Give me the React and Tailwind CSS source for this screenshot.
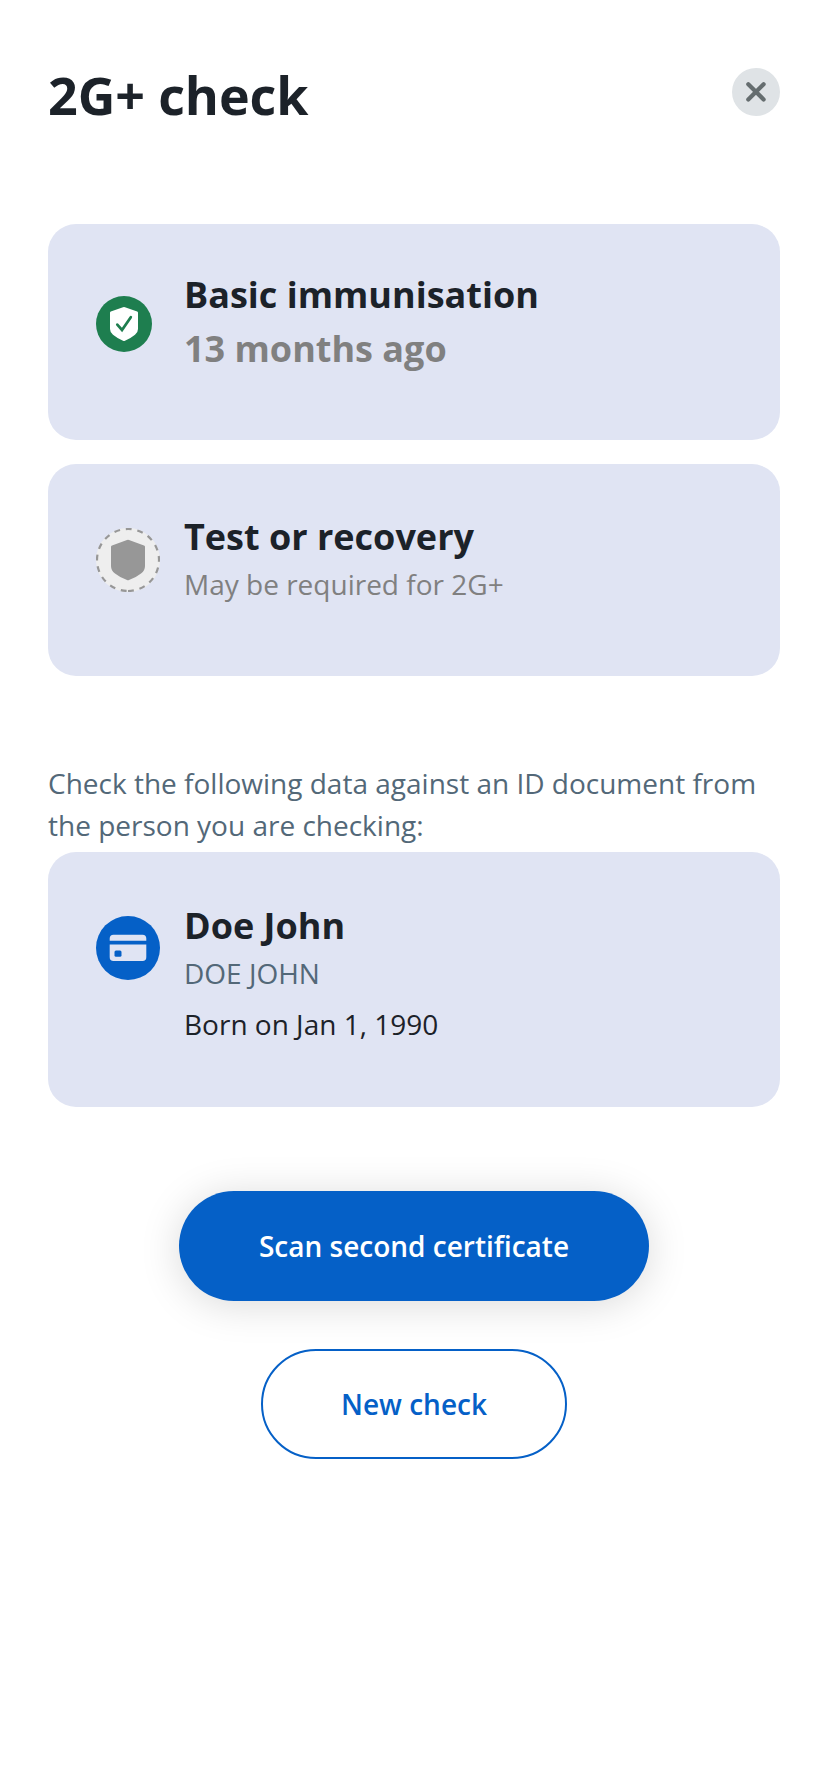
export default function App() {
  return (
    <main className="min-h-[1792px] w-full bg-white px-12 font-['Open_Sans',sans-serif] text-[#1c2229]">
      <header className="flex h-[224px] items-start justify-between pt-[68px]">
        <h1 className="mt-[-9px] text-[52px] font-bold leading-[72px] tracking-[-0.1px]">2G+ check</h1>
        <button aria-label="Close" className="flex size-12 items-center justify-center rounded-full bg-[#dfe3e6]">
          <svg className="size-12" viewBox="0 0 48 48" fill="none" stroke="#656d6f" strokeWidth="4.2" strokeLinecap="round"><path d="M16.3 16.3 31.6 31.4M31.6 16.3 16.3 31.4" /></svg>
        </button>
      </header>
      <section className="flex h-[216px] rounded-[28px] bg-[#e0e4f3] pl-12">
        <svg className="mt-[72px] size-14 shrink-0" viewBox="0 0 56 56"><circle cx="28" cy="28" r="28" fill="#1e7e4f" /><path d="M27 11.2Q28 10.8 29 11.2L41.2 15.5Q42 15.8 42 16.7V33Q42 36.5 39 38.8 34.5 42.5 29 44.8 28 45.2 27 44.8 21.5 42.5 17 38.8 14 36.5 14 33V16.7Q14 15.8 14.8 15.5Z" fill="white" /><path d="M21.3 28.6 26 34 34.8 21.2" fill="none" stroke="#1e7e4f" strokeWidth="2.7" strokeLinecap="round" /></svg>
        <div className="ml-8 pt-[44px] text-[36px] font-bold leading-[54px]"><h2>Basic immunisation</h2><p className="text-[#808080]">13 months ago</p></div>
      </section>
      <section className="mt-6 flex h-[212px] rounded-[28px] bg-[#e0e4f3] pl-12">
        <svg className="mt-16 size-16 shrink-0" viewBox="0 0 64 64"><circle cx="32" cy="32" r="32" fill="#eee" /><path d="M32 63A31 31 0 0 0 32 1A31 31 0 0 0 32 63" fill="none" stroke="#979797" strokeWidth="2.2" strokeDasharray="5.85 5.85" /><path d="M31 12.1Q32 11.6 33 12.1L48 17.4Q49 17.8 49 18.8V38Q49 42.5 45 45.5 40 49.5 33 52.1 32 52.5 31 52.1 24 49.5 19 45.5 15 42.5 15 38V18.8Q15 17.8 16 17.4Z" fill="#979797" /></svg>
        <div className="ml-6 pt-[46px]"><h2 className="text-[36px] font-bold leading-[54px]">Test or recovery</h2><p className="mt-[-1px] text-[28px] leading-[42px] text-[#808080]">May be required for 2G+</p></div>
      </section>
      <p className="mt-[86px] text-[28px] leading-[42px] text-[#536878]">Check the following data against an ID document from the person you are checking:</p>
      <section className="mt-1.5 flex h-[255px] rounded-[28px] bg-[#e0e4f3] pl-12">
        <svg className="mt-16 size-16 shrink-0" viewBox="0 0 64 64"><circle cx="32" cy="32" r="32" fill="#0560c7" /><path d="M13.7 24.8V22.5Q13.7 18.7 17.5 18.7H46.5Q50.3 18.7 50.3 22.5V24.8ZM13.7 28.5H50.3V41.3Q50.3 45.1 46.5 45.1H17.5Q13.7 45.1 13.7 41.3Z" fill="#e0e4f3" /><rect x="18.5" y="34.5" width="7" height="6.3" rx="1.5" fill="#0560c7" /></svg>
        <div className="ml-6 pt-[47px]"><h2 className="text-[36px] font-bold leading-[54px]">Doe John</h2><p className="mt-[-1px] text-[28px] leading-[42px] text-[#536878]">DOE JOHN</p><p className="mt-[9px] text-[28px] leading-[42px]">Born on Jan 1, 1990</p></div>
      </section>
      <div className="mt-[84px] flex flex-col items-center gap-12">
        <button className="h-[110px] w-[470px] rounded-full bg-[#0560c7] text-[28px] font-semibold text-white shadow-[0_4px_40px_rgba(0,0,0,0.15)]">Scan second certificate</button>
        <button className="h-[110px] w-[306px] rounded-full border-2 border-[#0560c7] text-[28px] font-semibold text-[#0560c7]">New check</button>
      </div>
    </main>
  );
}
